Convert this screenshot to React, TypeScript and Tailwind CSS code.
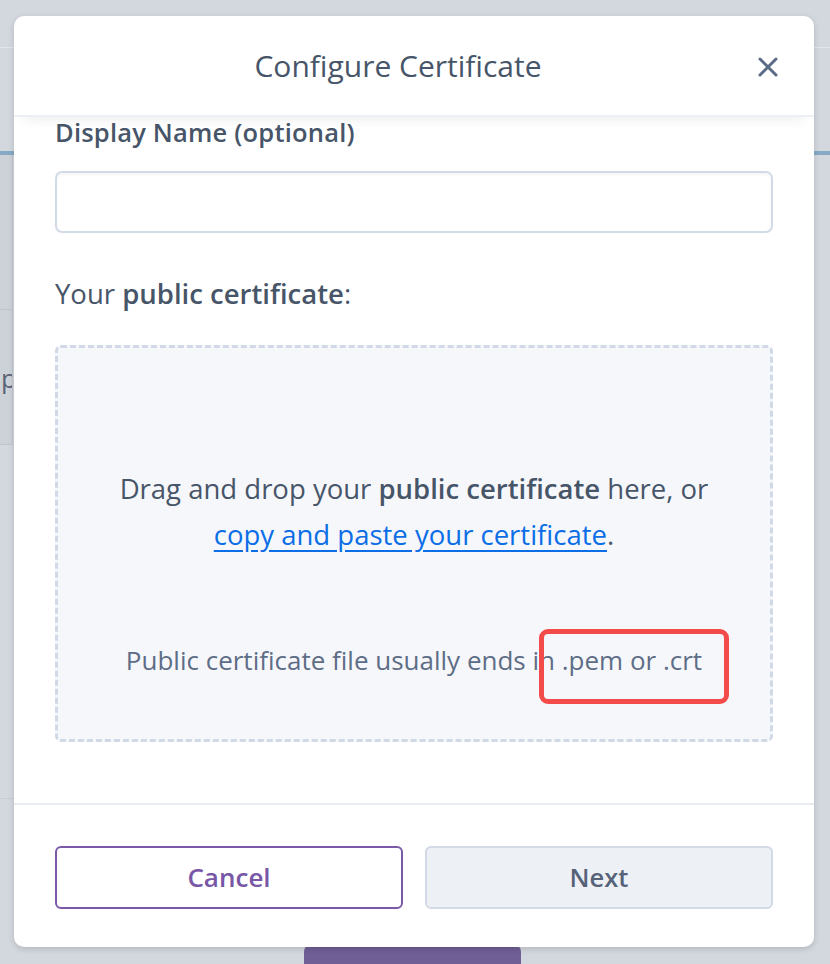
const font = { fontFamily: '"Open Sans", "Noto Sans", sans-serif' };

function CloseIcon() {
  return (
    <svg width="22" height="22" viewBox="0 0 22 22" fill="none">
      <path d="M3 3L19 19M19 3L3 19" stroke="#5a6b85" strokeWidth="3" strokeLinecap="round" />
    </svg>
  );
}

export default function App() {
  return (
    <div className="relative h-[964px] w-[830px] overflow-hidden bg-[#d3d7de]" style={font}>
      {/* page behind the overlay */}
      <div className="h-[48px] border-b border-[#e2e5ea]" />
      <div className="mt-[103px] h-[4px] bg-[#86aac6]" />
      <div className="flex">
        <div className="w-[13px] overflow-hidden border-r border-[#c3c8d0] bg-[#cdd1d8]">
          <div className="mt-[154px] h-[136px] border-y border-[#c0c5cd] pl-px text-[26px] leading-[136px] text-[#5a6477]">p</div>
        </div>
      </div>
      <div className="absolute left-0 top-[798px] h-px w-[14px] bg-[#c7ccd3]" />
      <div className="absolute bottom-0 left-[304px] h-[20px] w-[217px] rounded-t-[8px] bg-[#705e96]" />

      {/* modal */}
      <div className="absolute left-[14px] top-[16px] flex h-[931px] w-[800px] flex-col overflow-hidden rounded-[10px] bg-white shadow-[0_2px_6px_rgba(0,0,0,0.15)]">
        <div className="relative z-10 flex h-[101px] shrink-0 items-center justify-center border-b-2 border-[#eceff4] pr-[32px] shadow-[0_10px_14px_-10px_rgba(0,0,0,0.1)]">
          <h1 className="text-[30px] font-normal text-[#475569]">Configure Certificate</h1>
          <button className="absolute right-[35px] top-[40px]">
            <CloseIcon />
          </button>
        </div>

        <div className="h-[686px] shrink-0 overflow-hidden px-[41px]">
          <label className="block text-[25.5px] font-semibold leading-[30px] tracking-[0.2px] text-[#475569]">Display Name (optional)</label>
          <input className="mt-[24px] block h-[62px] w-full rounded-[7px] border-2 border-[#d3dae7] bg-white shadow-[inset_0_2px_3px_rgba(0,0,0,0.04)] outline-none" />
          <p className="mt-[45px] text-[27.5px] leading-[32px] text-[#475569]">
            Your <span className="font-semibold">public certificate</span>:
          </p>
          <div className="relative mt-[35px] flex h-[397px] flex-col items-center rounded-[6px] border-[3px] border-dashed border-[#d1d8e6] bg-[#f6f7fb] text-center">
            <p className="mt-[118px] text-[27.5px] leading-[46px] text-[#475569]">
              Drag and drop your <span className="font-semibold">public certificate</span> here, or
              <br />
              <a className="text-[#0b6ee6] underline underline-offset-[5px]" href="#">copy and paste your certificate</a>.
            </p>
            <p className="mt-[86px] text-[26px] leading-[32px] text-[#5e6d86]">Public certificate file usually ends in .pem or .crt</p>
            <div className="absolute left-[481px] top-[281px] h-[75px] w-[190px] rounded-[9px] border-[5px] border-[#f34b4a]" />
          </div>
        </div>

        <div className="flex gap-[22px] border-t-2 border-[#e8ebf0] px-[41px] pt-[41px]">
          <button className="h-[63px] flex-1 rounded-[6px] border-2 border-[#7a5aa8] bg-white text-[26px] font-semibold text-[#7757a6]">Cancel</button>
          <button className="h-[63px] flex-1 rounded-[6px] border-2 border-[#d2d9e7] bg-[#edf0f5] text-[25.5px] font-semibold text-[#556278]">Next</button>
        </div>
      </div>
    </div>
  );
}
